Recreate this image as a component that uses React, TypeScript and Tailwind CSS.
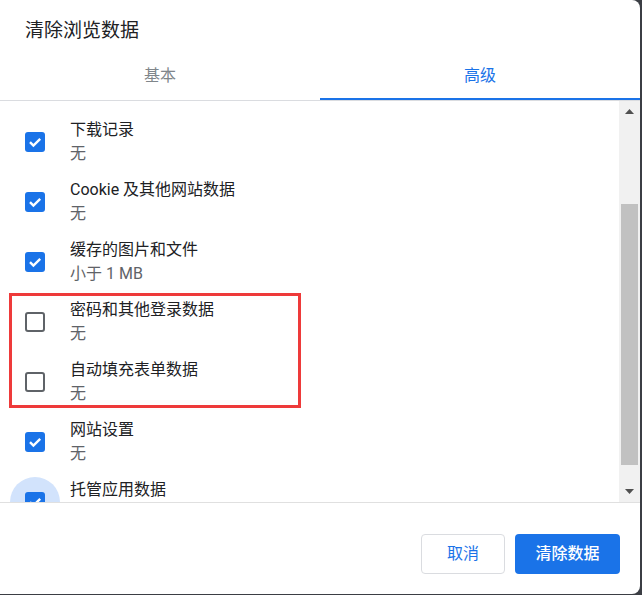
import React from 'react';

type Item = {
    label: string;
    detail: string;
    checked: boolean;
    focused?: boolean;
};

const items: Item[] = [
    { label: '下载记录', detail: '无', checked: true },
    { label: 'Cookie 及其他网站数据', detail: '无', checked: true },
    { label: '缓存的图片和文件', detail: '小于 1 MB', checked: true },
    { label: '密码和其他登录数据', detail: '无', checked: false },
    { label: '自动填充表单数据', detail: '无', checked: false },
    { label: '网站设置', detail: '无', checked: true },
    { label: '托管应用数据', detail: '无', checked: true, focused: true },
];

const Checkbox: React.FC<{ checked: boolean; focused?: boolean }> = ({ checked, focused }) => (
    <div className="relative w-[20px] h-[20px] shrink-0">
        {focused && <div className="absolute -inset-[15px] rounded-full bg-[#d2e3fc]"></div>}
        {checked ? (
            <div className="relative w-full h-full rounded-[3px] bg-[#1a73e8] flex items-center justify-center">
                <svg width="20" height="20" viewBox="0 0 20 20" fill="none">
                    <path d="M5 10.2l3.4 3.4L15.2 6.8" stroke="white" strokeWidth="2.4" />
                </svg>
            </div>
        ) : (
            <div className="relative w-full h-full rounded-[3px] border-2 border-[#5f6368]"></div>
        )}
    </div>
);

const Row: React.FC<{ item: Item }> = ({ item }) => (
    <div className="h-[60px] flex items-center pl-[25px] gap-[25px]">
        <Checkbox checked={item.checked} focused={item.focused} />
        <div className="flex flex-col">
            <span className="text-[16px] leading-[24px] text-[#202124]">{item.label}</span>
            <span className="text-[16px] leading-[24px] text-[#5f6368]">{item.detail}</span>
        </div>
    </div>
);

const App: React.FC = () => {
    return (
        <div
            className="w-[642px] h-[595px] bg-[#3b3e44] overflow-hidden"
            style={{ fontFamily: 'Roboto, "Noto Sans CJK SC", sans-serif' }}
        >
            <div className="w-[640px] h-[594px] bg-white rounded-tr-[8px] rounded-br-[8px] flex flex-col overflow-hidden">
                <h1 className="pt-[17px] pl-[25px] text-[19px] leading-[28px] font-normal text-[#202124]">
                    清除浏览数据
                </h1>

                {/* tabs */}
                <div className="mt-[7px] flex border-b border-[#dadce0]">
                    <div className="w-[320px] h-[48px] flex items-center justify-center text-[16px] text-[#80868b]">
                        基本
                    </div>
                    <div className="flex-1 h-[48px] relative flex items-center justify-center text-[16px] text-[#1a73e8]">
                        高级
                        <span className="absolute left-0 right-0 bottom-0 h-[2px] bg-[#1a73e8]"></span>
                    </div>
                </div>

                {/* list + scrollbar */}
                <div className="h-[402px] flex border-b border-[#e0e0e0]">
                    <div className="flex-1 overflow-hidden pt-[11px]">
                        {items.map((item) => (
                            <Row key={item.label} item={item} />
                        ))}
                    </div>
                    <div className="w-[21px] bg-[#f1f1f1] flex flex-col">
                        <div className="h-[21px] flex items-center justify-center">
                            <svg width="9" height="5" viewBox="0 0 9 5">
                                <path d="M4.5 0L9 5H0z" fill="#505050" />
                            </svg>
                        </div>
                        <div className="flex-1 px-[2px]">
                            <div className="mt-[82px] h-[261px] bg-[#c1c1c1]"></div>
                        </div>
                        <div className="h-[21px] flex items-center justify-center">
                            <svg width="9" height="5" viewBox="0 0 9 5">
                                <path d="M0 0H9L4.5 5z" fill="#505050" />
                            </svg>
                        </div>
                    </div>
                </div>

                {/* footer */}
                <div className="flex justify-end gap-[10px] pt-[31px] pr-[20px]">
                    <button className="w-[84px] h-[40px] rounded-[4px] border border-[#dadce0] bg-white text-[16px] text-[#1a73e8]">
                        取消
                    </button>
                    <button className="w-[105px] h-[40px] rounded-[4px] bg-[#1a73e8] text-[16px] font-medium text-white">
                        清除数据
                    </button>
                </div>
            </div>

            {/* annotation box */}
            <div className="absolute left-[9px] top-[293px] w-[292px] h-[115px] border-[3px] border-[#ee3a3a]"></div>
        </div>
    );
};

export default App;
